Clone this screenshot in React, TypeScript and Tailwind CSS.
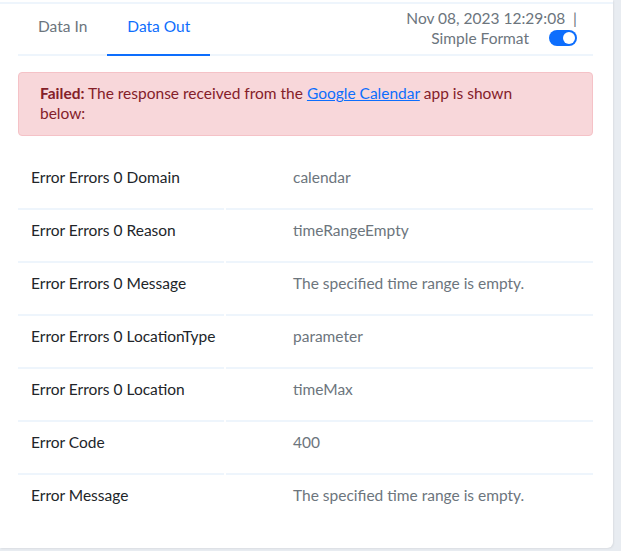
import { useState } from 'react';

type Row = { label: string; value: string };

const rows: Row[] = [
  { label: 'Error Errors 0 Domain', value: 'calendar' },
  { label: 'Error Errors 0 Reason', value: 'timeRangeEmpty' },
  { label: 'Error Errors 0 Message', value: 'The specified time range is empty.' },
  { label: 'Error Errors 0 LocationType', value: 'parameter' },
  { label: 'Error Errors 0 Location', value: 'timeMax' },
  { label: 'Error Code', value: '400' },
  { label: 'Error Message', value: 'The specified time range is empty.' },
];

function Toggle({ on, onChange }: { on: boolean; onChange: (v: boolean) => void }) {
  return (
    <button
      type="button"
      onClick={() => onChange(!on)}
      className={`relative h-[16px] w-[28px] rounded-full ${on ? 'bg-[#0d6efd]' : 'bg-gray-300'}`}
    >
      <span
        className={`absolute top-[2px] h-[12px] w-[12px] rounded-full bg-white ${on ? 'left-[14px]' : 'left-[2px]'}`}
      />
    </button>
  );
}

export default function App() {
  const [tab, setTab] = useState<'in' | 'out'>('out');
  const [simple, setSimple] = useState(true);

  const tabCls = (active: boolean) =>
    `-mb-[2px] flex h-[52px] items-start border-b-2 px-[20px] pt-[12px] text-[15.5px] leading-[20px] ${
      active ? 'border-[#0d6efd] text-[#0d6efd]' : 'border-transparent text-[#6c757d]'
    }`;

  return (
    <div
      className="min-h-[551px] bg-[#e8ecf1] pb-[4px] pr-[8px]"
      style={{ fontFamily: '"Lato", "Open Sans", sans-serif' }}
    >
      <div className="rounded-br-[6px] bg-white pb-[22px] pt-[2px] shadow-[1px_1px_2px_rgba(0,0,0,0.06)]">
        <div className="h-[2px] bg-[#eef5fc]" />

        <div className="pl-[18px] pr-[20px]">
          {/* tabs + run info */}
          <div className="flex h-[52px] justify-between border-b-2 border-[#eef5fc]">
            <div className="flex">
              <button type="button" onClick={() => setTab('in')} className={tabCls(tab === 'in')}>
                Data In
              </button>
              <button type="button" onClick={() => setTab('out')} className={tabCls(tab === 'out')}>
                Data Out
              </button>
            </div>
            <div className="flex flex-col items-end pr-[16px] pt-[4px] text-[15.5px] leading-[20px] text-[#6c757d]">
              <span className="whitespace-pre">Nov 08, 2023 12:29:08  |</span>
              <div className="flex items-center gap-[20px]">
                <span>Simple Format</span>
                <span className="flex">
                  <Toggle on={simple} onChange={setSimple} />
                </span>
              </div>
            </div>
          </div>

          <p className="mt-[16px] rounded-[4px] border border-[#f5c2c7] bg-[#f8d7da] pb-[12px] pl-[21px] pr-[30px] pt-[10px] text-[15.5px] leading-[20px] text-[#842029]">
            <strong className="font-bold">Failed:</strong> <span>The response received from the</span>{' '}
            <a href="#" className="text-[#0d6efd] underline">
              Google Calendar
            </a>{' '}
            <span>app is shown</span>
            <br />
            <span>below:</span>
          </p>

          <div className="mt-[21px] grid grid-cols-[206px_1fr] gap-x-[2px] text-[15.5px] leading-[20px]">
            {rows.map((r, i) => {
              const line = i < rows.length - 1 ? 'border-b-2 border-[#eef5fc]' : '';
              return (
                <div key={r.label} className="contents">
                  <div className={`pb-[21px] pl-[13px] pt-[10px] text-[#212529] ${line}`}>{r.label}</div>
                  <div className={`pb-[21px] pl-[67px] pt-[10px] text-[#6c757d] ${line}`}>{r.value}</div>
                </div>
              );
            })}
          </div>
        </div>
      </div>
    </div>
  );
}
